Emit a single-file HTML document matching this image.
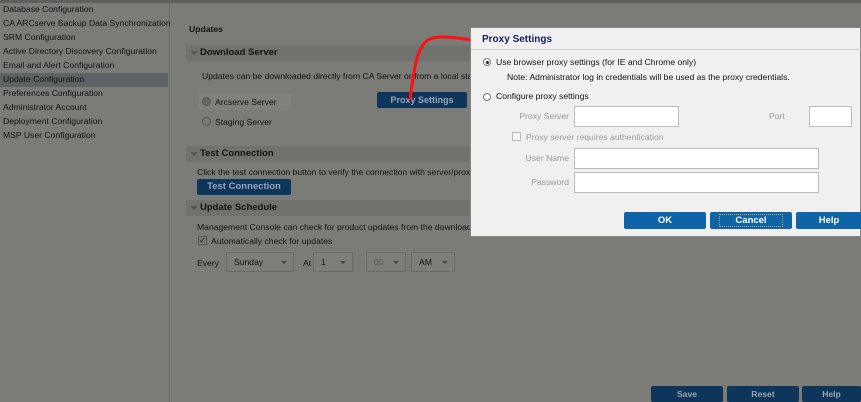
<!DOCTYPE html>
<html><head><meta charset="utf-8"><style>
*{margin:0;padding:0;box-sizing:border-box}
body{width:861px;height:402px;overflow:hidden;background:#7b7c78;font-family:"Liberation Sans",Arial,sans-serif;font-size:8.6px;color:#111;position:relative}
.abs{position:absolute;white-space:nowrap}
.top{left:0;top:0;width:861px;height:3px;background:#5f605d}
.side{left:0;top:3px;width:170px;height:399px;background:#7b7c78;border-right:1px solid #6a6b68}
.side div{height:14px;line-height:13px;padding-left:3px;white-space:nowrap}
.side .sel{background:#5e6166;width:168px}
.hdr{left:186px;width:300px;height:16px;background:#71726e;font-weight:bold;font-size:9.5px;line-height:16px;padding-left:14px}
.hdr:before{content:"";position:absolute;left:4px;top:6px;border-left:4px solid transparent;border-right:4px solid transparent;border-top:4px solid #555}
.btn{background:#0e355a;color:#9aa6b4;text-align:center;font-weight:bold;border-radius:2px}
.sel2{border:1px solid #6a6b68;background:#7d7e7a;height:20px;line-height:18px;padding-left:7px}
.sel2:after{content:"";position:absolute;right:6px;top:8px;border-left:3px solid transparent;border-right:3px solid transparent;border-top:3px solid #444}
.dlg{left:470px;top:27px;width:391px;height:210px;background:#f0f0f0;border:1px solid #888}
.dlg .t{position:absolute;left:11px;top:6px;font-weight:bold;font-size:10px;color:#14205a}
.dlg .line{position:absolute;left:0;top:21px;width:391px;height:1px;background:#ccc}
.in{position:absolute;background:#fff;border:1px solid #bbb}
.g{color:#999;position:absolute;white-space:nowrap}
.r{text-align:right;width:80px}
.dbtn{position:absolute;top:184px;height:17px;background:#0f64a8;color:#fff;font-weight:bold;text-align:center;line-height:17px;border-radius:2px;font-size:9.5px}
</style></head><body>
<div class="abs top"></div>
<div class="abs side">
<div>Database Configuration</div><div>CA ARCserve Backup Data Synchronization</div><div>SRM Configuration</div><div>Active Directory Discovery Configuration</div><div>Email and Alert Configuration</div><div class="sel">Update Configuration</div><div>Preferences Configuration</div><div>Administrator Account</div><div>Deployment Configuration</div><div>MSP User Configuration</div>
</div>
<div class="abs" style="left:189px;top:24px;font-weight:bold">Updates</div>
<div class="abs hdr" style="top:45px">Download Server</div>
<div class="abs" style="left:202px;top:71px">Updates can be downloaded directly from CA Server or from a local stag</div>
<div class="abs" style="left:199px;top:93px;width:92px;height:17px;background:#80817d"></div>
<div class="abs" style="left:202px;top:97px;width:9px;height:9px;border-radius:50%;border:1px solid #555;background:#666"></div>
<div class="abs" style="left:215px;top:97px">Arcserve Server</div>
<div class="abs" style="left:202px;top:117px;width:9px;height:9px;border-radius:50%;border:1px solid #555"></div>
<div class="abs" style="left:215px;top:117px">Staging Server</div>
<div class="abs btn" style="left:377px;top:92px;width:90px;height:16px;line-height:16px;font-size:9px">Proxy Settings</div>
<div class="abs hdr" style="top:146px">Test Connection</div>
<div class="abs" style="left:197px;top:167px">Click the test connection button to verify the connection with server/proxy</div>
<div class="abs btn" style="left:197px;top:179px;width:94px;height:16px;line-height:16px;font-size:9.5px">Test Connection</div>
<div class="abs hdr" style="top:200px">Update Schedule</div>
<div class="abs" style="left:197px;top:222px">Management Console can check for product updates from the download s</div>
<div class="abs" style="left:198px;top:236px;width:9px;height:9px;border:1px solid #555;font-size:8px;line-height:7px;text-align:center">✓</div>
<div class="abs" style="left:211px;top:236px">Automatically check for updates</div>
<div class="abs" style="left:197px;top:258px">Every</div>
<div class="abs sel2" style="left:226px;top:252px;width:68px">Sunday</div>
<div class="abs" style="left:303px;top:258px">At</div>
<div class="abs sel2" style="left:313px;top:252px;width:40px">1</div>
<div class="abs" style="left:359px;top:258px;color:#555">:</div>
<div class="abs sel2" style="left:366px;top:252px;width:40px;color:#555">00</div>
<div class="abs sel2" style="left:411px;top:252px;width:44px">AM</div>
<div class="abs btn" style="left:651px;top:386px;width:72px;height:16px;line-height:16px">Save</div>
<div class="abs btn" style="left:727px;top:386px;width:72px;height:16px;line-height:16px">Reset</div>
<div class="abs btn" style="left:802px;top:386px;width:59px;height:16px;line-height:16px">Help</div>
<svg class="abs" style="left:405px;top:30px" width="80" height="75"><path d="M5 70 C8 50 10 15 25 9 C35 5 50 8 68 10" stroke="#ff1010" stroke-width="3" fill="none"/></svg>
<div class="abs dlg">
<div class="t">Proxy Settings</div><div class="line"></div>
<div style="position:absolute;left:12px;top:30px;width:8px;height:8px;border-radius:50%;border:1px solid #777;background:#fff"><div style="margin:1.5px;width:3px;height:3px;border-radius:50%;background:#222"></div></div>
<div class="abs" style="left:25px;top:29px">Use browser proxy settings (for IE and Chrome only)</div>
<div class="abs" style="left:36px;top:44px">Note: Administrator log in credentials will be used as the proxy credentials.</div>
<div style="position:absolute;left:12px;top:65px;width:8px;height:8px;border-radius:50%;border:1px solid #777;background:#fff"></div>
<div class="abs" style="left:25px;top:63px">Configure proxy settings</div>
<div class="g r" style="left:18px;top:83px">Proxy Server</div>
<div class="in" style="left:103px;top:78px;width:105px;height:21px"></div>
<div class="g" style="left:298px;top:83px">Port</div>
<div class="in" style="left:338px;top:78px;width:43px;height:21px"></div>
<div style="position:absolute;left:41px;top:104px;width:9px;height:9px;border:1px solid #bbb;background:#f6f6f6"></div>
<div class="g" style="left:55px;top:104px">Proxy server requires authentication</div>
<div class="g r" style="left:18px;top:125px">User Name</div>
<div class="in" style="left:103px;top:120px;width:245px;height:21px"></div>
<div class="g r" style="left:18px;top:149px">Password</div>
<div class="in" style="left:103px;top:144px;width:245px;height:21px"></div>
<div class="dbtn" style="left:153px;width:82px">OK</div>
<div class="dbtn" style="left:239px;width:82px"><span style="border:1px dotted #c8a060;padding:0 15px">Cancel</span></div>
<div class="dbtn" style="left:325px;width:66px">Help</div>
</div>
</body></html>
